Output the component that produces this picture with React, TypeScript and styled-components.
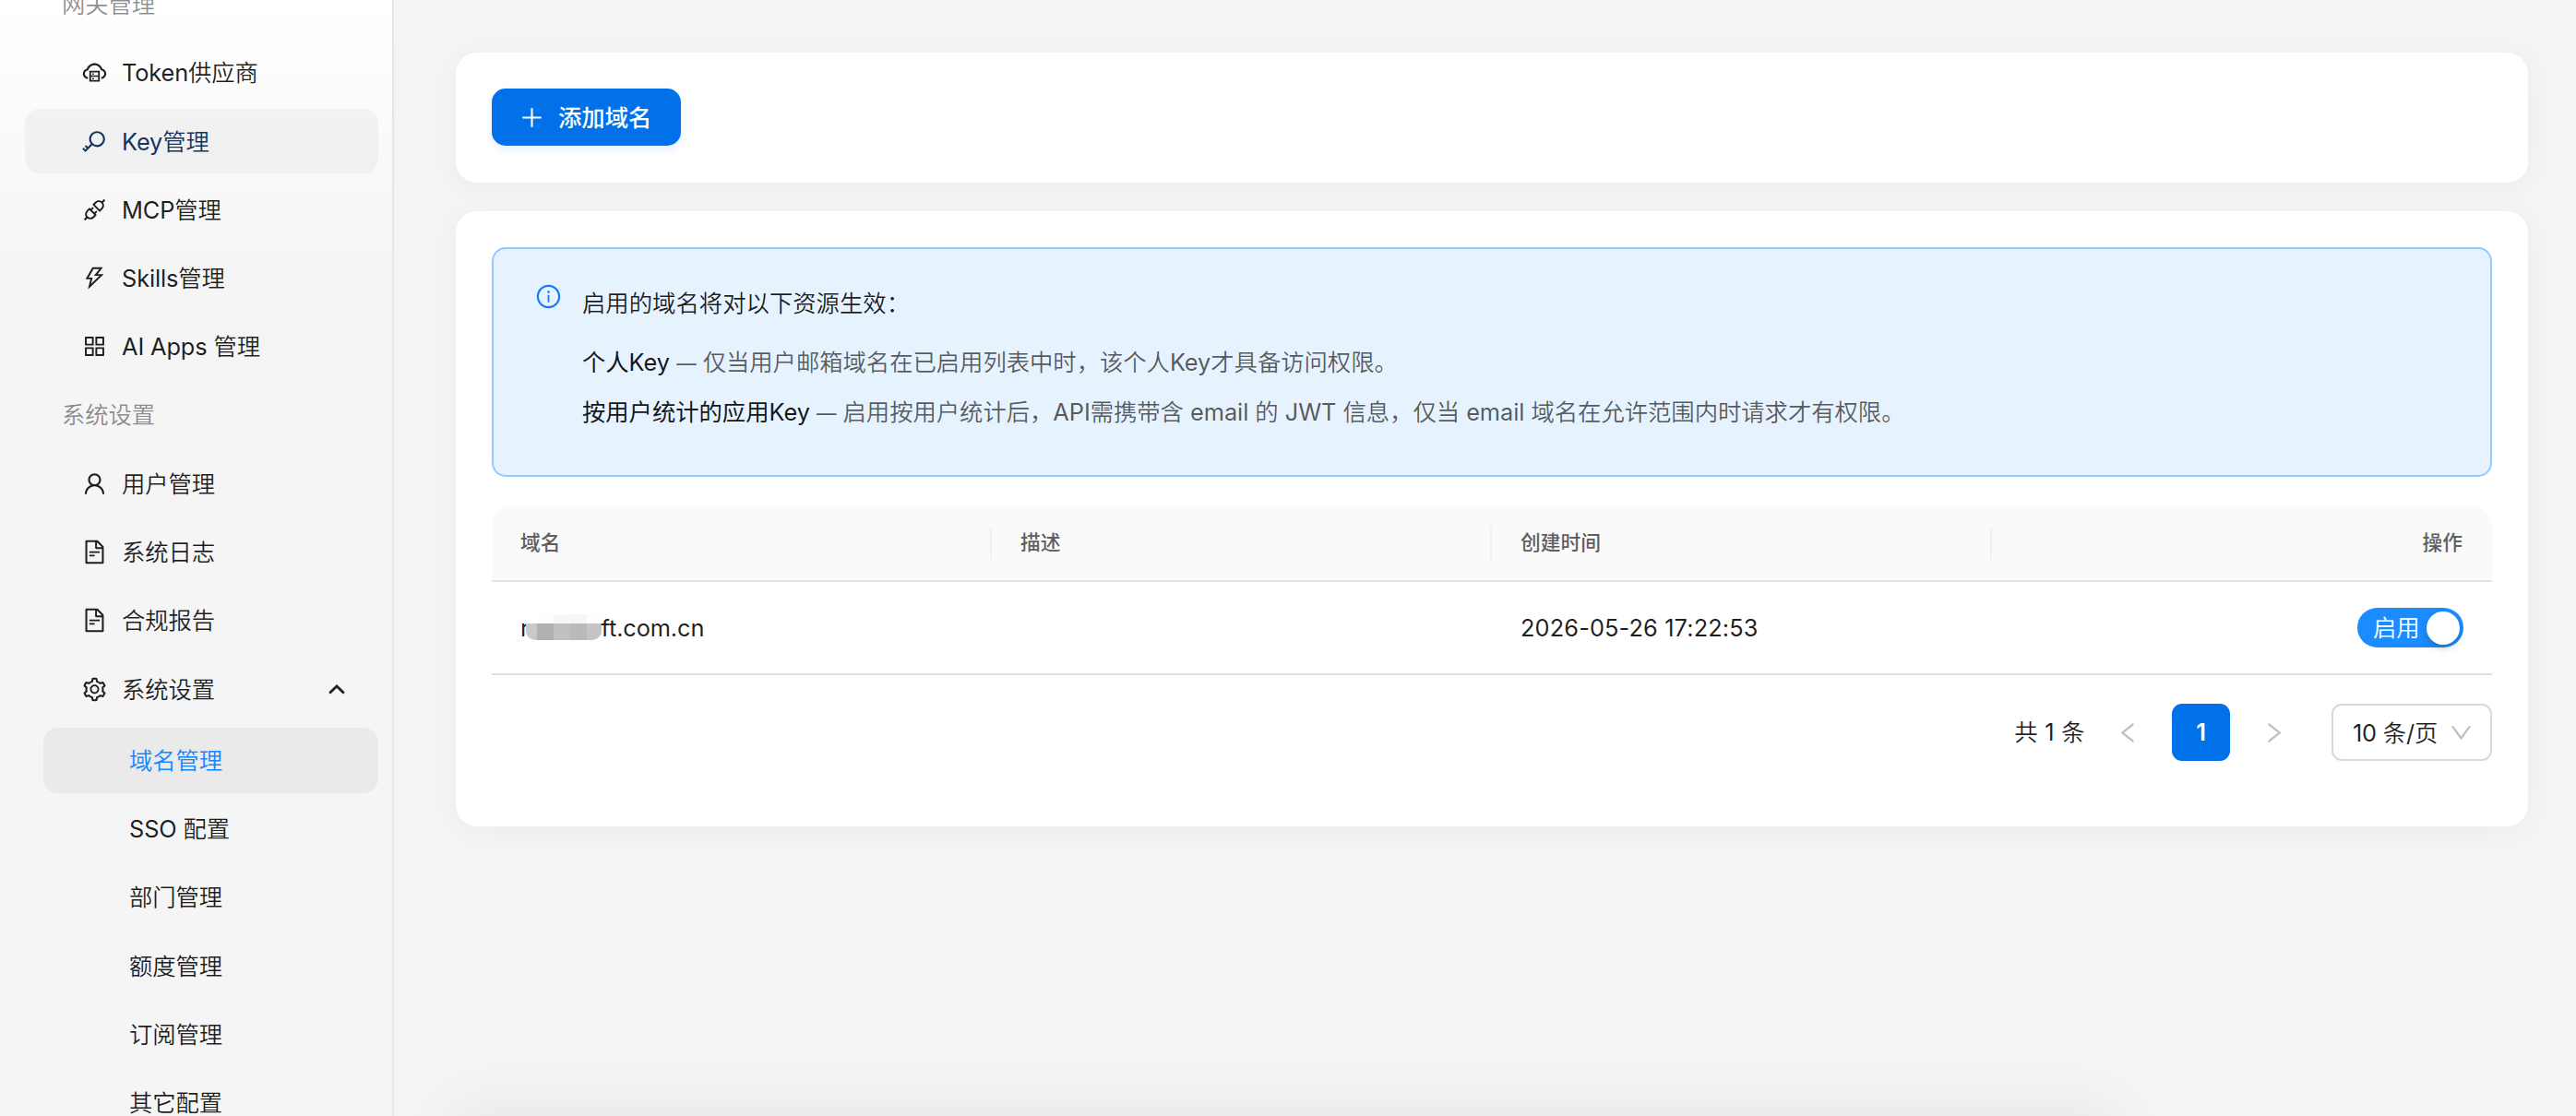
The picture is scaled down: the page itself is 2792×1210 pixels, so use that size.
import React from "react";
import styled, { createGlobalStyle, css } from "styled-components";
import {
  AiOutlineApi,
  AiOutlineAppstore,
  AiOutlineCloudServer,
  AiOutlineDown,
  AiOutlineFileText,
  AiOutlineInfoCircle,
  AiOutlineKey,
  AiOutlineLeft,
  AiOutlinePlus,
  AiOutlineRight,
  AiOutlineSetting,
  AiOutlineThunderbolt,
  AiOutlineUser,
} from "react-icons/ai";

const regularStack = `Inter, "Noto Sans CJK SC DemiLight", "Noto Sans CJK SC", sans-serif`;
const mediumStack = `Inter, "Noto Sans CJK SC", sans-serif`;

const GlobalStyle = createGlobalStyle`
  * { box-sizing: border-box; }
  body {
    margin: 0;
    background: #f4f4f7;
    color: rgba(0, 0, 0, 0.88);
    font-family: ${regularStack};
    font-size: 25.375px;
    line-height: 1.57;
    overflow: hidden;
  }
`;

const Page = styled.div`
  display: flex;
  width: 2792px;
  height: 1210px;
  overflow: hidden;
`;

const Sidebar = styled.aside`
  flex: none;
  width: 427px;
  height: 1210px;
  padding: 0 15px 0 27px;
  overflow: hidden;
  border-right: 2px solid #e6e6e8;
  background: linear-gradient(180deg, #ffffff 0, #f5f5f5 300px, #f5f5f5 100%);
  letter-spacing: -0.12px;
`;

const Menu = styled.nav`
  display: flex;
  flex-direction: column;
  gap: 4px;
  margin-top: -30.5px;
`;

const rowBase = css`
  display: flex;
  align-items: center;
  height: 70.25px;
  flex: none;
  border-radius: 16px;
  white-space: nowrap;
`;

const GroupLabel = styled.div`
  ${rowBase}
  padding-left: 40px;
  color: rgba(0, 0, 0, 0.45);
`;

const MenuItem = styled.div<{ $hovered?: boolean }>`
  ${rowBase}
  gap: 15px;
  padding: 0 36px 0 61px;
  color: ${(p) => (p.$hovered ? "#17355c" : "rgba(0, 0, 0, 0.88)")};
  background: ${(p) => (p.$hovered ? "rgba(0, 0, 0, 0.035)" : "transparent")};

  & > svg:first-child {
    width: 29px;
    height: 29px;
  }
`;

const ItemText = styled.span`
  flex: 1;
  padding-top: 1px;
`;

const SubMenu = styled.div`
  display: flex;
  flex-direction: column;
  gap: 4px;
  margin: 3px 0 0 20px;
`;

const SubItem = styled.div<{ $selected?: boolean }>`
  ${rowBase}
  padding: 1px 0 0 93px;
  color: ${(p) => (p.$selected ? "#1287ff" : "rgba(0, 0, 0, 0.88)")};
  background: ${(p) => (p.$selected ? "#eaeaea" : "transparent")};
`;

const Main = styled.main`
  flex: 1;
  display: flex;
  flex-direction: column;
  gap: 31px;
  padding: 57px 52px 0 67px;
`;

const Card = styled.section<{ $height: number }>`
  flex: none;
  height: ${(p) => p.$height}px;
  padding: 39px;
  border-radius: 23px;
  background: #fff;
  box-shadow: 0 4px 28px rgba(0, 0, 0, 0.04);
`;

const BottomPanel = styled.div`
  flex: none;
  height: 120px;
  margin: auto 450px -120px 0;
  background: #fff;
  box-shadow: 0 0 70px rgba(0, 0, 0, 0.07);
`;

const PrimaryButton = styled.button`
  display: flex;
  align-items: center;
  gap: 14px;
  width: 205px;
  height: 62px;
  padding: 0 0 0 29px;
  border: 0;
  border-radius: 15px;
  background: #0071e8;
  color: #fff;
  font: inherit;
  font-family: ${mediumStack};
  font-weight: 500;
  box-shadow: 0 4px 8px rgba(0, 100, 255, 0.12);

  svg {
    width: 29px;
    height: 29px;
  }
`;

const ButtonText = styled.span`
  padding-top: 2px;
`;

const Alert = styled.div`
  display: flex;
  height: 249px;
  padding: 37px 45px;
  border: 2px solid #91caff;
  border-radius: 15px;
  background: #e6f3ff;

  & > svg {
    flex: none;
    width: 29px;
    height: 29px;
    margin: 0 22px 0 0;
    color: #1677ff;
  }
`;

const AlertBody = styled.div`
  display: flex;
  flex-direction: column;
  white-space: nowrap;
`;

const AlertTitle = styled.div`
  height: 66px;
  line-height: 44px;
`;

const AlertLine = styled.div`
  height: 56px;
  line-height: 45px;
  color: rgba(0, 0, 0, 0.65);
  letter-spacing: -0.05px;
`;

const Strong = styled.span`
  color: rgba(0, 0, 0, 0.92);
  font-family: ${mediumStack};
`;

const Dash = styled.span`
  font-size: 21.5px;
`;

const Table = styled.div`
  margin-top: 31px;
`;

const columns = css`
  display: grid;
  grid-template-columns: repeat(4, 1fr);
  align-items: center;
`;

const HeadRow = styled.div`
  ${columns}
  height: 83px;
  border-bottom: 2px solid #e0e0e0;
  border-radius: 23px 23px 0 0;
  background: #fafafa;
`;

const HeadCell = styled.div<{ $right?: boolean }>`
  display: flex;
  align-items: center;
  justify-content: ${(p) => (p.$right ? "flex-end" : "flex-start")};
  height: 34px;
  padding: 0 ${(p) => (p.$right ? 32 : 31)}px 0 31px;
  border-right: ${(p) => (p.$right ? "0" : "2px solid #f0f0f0")};
  color: #5f5f63;
  font-family: ${mediumStack};
  font-size: 21.75px;
  font-weight: 500;
`;

const BodyRow = styled.div`
  ${columns}
  height: 101px;
  border-bottom: 2px solid #e0e0e0;
`;

const Cell = styled.div<{ $right?: boolean }>`
  display: flex;
  align-items: center;
  justify-content: ${(p) => (p.$right ? "flex-end" : "flex-start")};
  padding: 0 31px;
  white-space: nowrap;
`;

const DateText = styled.span`
  letter-spacing: 0.12px;
`;

const Mosaic = styled.span`
  display: flex;
  width: 82px;
  height: 28px;
  margin: -1px 0 0 -4px;
  overflow: hidden;
  border-radius: 2px 2px 10px 10px;
`;

const MosaicTile = styled.i<{ $w: number; $c: string; $top: string }>`
  width: ${(p) => p.$w}px;
  background: linear-gradient(${(p) => p.$top} 10px, ${(p) => p.$c} 10px);
`;

const DomainTail = styled.span`
  letter-spacing: -0.12px;
`;

const Switch = styled.div`
  display: flex;
  align-items: center;
  justify-content: space-between;
  width: 115px;
  height: 43px;
  padding: 0 4px 0 17px;
  border-radius: 22px;
  background: #1a8cff;
  color: #fff;
`;

const Knob = styled.span`
  width: 36px;
  height: 36px;
  border-radius: 50%;
  background: #fff;
  box-shadow: 0 4px 7px rgba(0, 35, 11, 0.2);
`;

const Pagination = styled.div`
  display: flex;
  align-items: center;
  justify-content: flex-end;
  height: 62px;
  margin-top: 31px;
`;

const Total = styled.span`
  margin-right: 32px;
  letter-spacing: 0.3px;
  white-space: nowrap;
`;

const Arrow = styled.span`
  display: flex;
  color: #bfbfbf;

  svg {
    width: 29px;
    height: 29px;
  }
`;

const PageNumber = styled.span`
  display: flex;
  align-items: center;
  justify-content: center;
  width: 63px;
  height: 62px;
  margin: 0 33px;
  border-radius: 11px;
  background: #0071e8;
  color: #fff;
  font-weight: 600;
`;

const SizeSelect = styled.div`
  display: flex;
  align-items: center;
  justify-content: space-between;
  width: 174px;
  height: 62px;
  margin-left: 48px;
  padding: 0 17px 0 21px;
  border: 2px solid #d9d9d9;
  border-radius: 11px;
  letter-spacing: -0.2px;
  white-space: nowrap;

  svg {
    width: 29px;
    height: 29px;
    color: #bfbfbf;
  }
`;

const SizeText = styled.span`
  padding-top: 2px;
`;

const ChevronUp = () => (
  <svg width="18" height="12" viewBox="0 0 18 12" fill="none">
    <path d="M2 9.8 9 3l7 6.8" stroke="#222" strokeWidth="2.8" strokeLinecap="round" />
  </svg>
);

const gatewayItems = [
  { icon: AiOutlineCloudServer, text: "Token供应商" },
  { icon: AiOutlineKey, text: "Key管理", hovered: true },
  { icon: AiOutlineApi, text: "MCP管理" },
  { icon: AiOutlineThunderbolt, text: "Skills管理" },
  { icon: AiOutlineAppstore, text: "AI Apps 管理" },
];

const systemItems = [
  { icon: AiOutlineUser, text: "用户管理" },
  { icon: AiOutlineFileText, text: "系统日志" },
  { icon: AiOutlineFileText, text: "合规报告" },
];

const settingItems = ["域名管理", "SSO 配置", "部门管理", "额度管理", "订阅管理", "其它配置"];

const mosaic = [
  { width: 12, color: "#c9c9c9", top: "#ffffff" },
  { width: 18, color: "#b1b1b1", top: "#fefefe" },
  { width: 18, color: "#c0c0c0", top: "#f7f7f7" },
  { width: 18, color: "#bababa", top: "#f6f6f6" },
  { width: 16, color: "#c5c5c5", top: "#fdfdfd" },
];

export default function App() {
  return (
    <Page>
      <GlobalStyle />
      <Sidebar>
        <Menu>
          <GroupLabel>网关管理</GroupLabel>
          {gatewayItems.map(({ icon: Icon, text, hovered }) => (
            <MenuItem key={text} $hovered={hovered}>
              <Icon />
              <ItemText>{text}</ItemText>
            </MenuItem>
          ))}
          <GroupLabel>系统设置</GroupLabel>
          {systemItems.map(({ icon: Icon, text }) => (
            <MenuItem key={text}>
              <Icon />
              <ItemText>{text}</ItemText>
            </MenuItem>
          ))}
          <MenuItem>
            <AiOutlineSetting />
            <ItemText>系统设置</ItemText>
            <ChevronUp />
          </MenuItem>
          <SubMenu>
            {settingItems.map((text, i) => (
              <SubItem key={text} $selected={i === 0}>
                {text}
              </SubItem>
            ))}
          </SubMenu>
        </Menu>
      </Sidebar>
      <Main>
        <Card $height={141}>
          <PrimaryButton>
            <AiOutlinePlus />
            <ButtonText>添加域名</ButtonText>
          </PrimaryButton>
        </Card>
        <Card $height={667}>
          <Alert>
            <AiOutlineInfoCircle />
            <AlertBody>
              <AlertTitle>启用的域名将对以下资源生效：</AlertTitle>
              <AlertLine>
                <Strong>个人Key</Strong> <Dash>—</Dash>{" "}
                仅当用户邮箱域名在已启用列表中时，该个人Key才具备访问权限。
              </AlertLine>
              <AlertLine>
                <Strong>按用户统计的应用Key</Strong> <Dash>—</Dash> 启用按用户统计后，API需携带含 email 的 JWT
                信息，仅当 email 域名在允许范围内时请求才有权限。
              </AlertLine>
            </AlertBody>
          </Alert>
          <Table>
            <HeadRow>
              <HeadCell>域名</HeadCell>
              <HeadCell>描述</HeadCell>
              <HeadCell>创建时间</HeadCell>
              <HeadCell $right>操作</HeadCell>
            </HeadRow>
            <BodyRow>
              <Cell>
                r
                <Mosaic>
                  {mosaic.map((tile) => (
                    <MosaicTile key={tile.color} $w={tile.width} $c={tile.color} $top={tile.top} />
                  ))}
                </Mosaic>
                <DomainTail>ft.com.cn</DomainTail>
              </Cell>
              <Cell />
              <Cell>
                <DateText>2026-05-26 17:22:53</DateText>
              </Cell>
              <Cell $right>
                <Switch>
                  启用
                  <Knob />
                </Switch>
              </Cell>
            </BodyRow>
          </Table>
          <Pagination>
            <Total>共 1 条</Total>
            <Arrow>
              <AiOutlineLeft />
            </Arrow>
            <PageNumber>1</PageNumber>
            <Arrow>
              <AiOutlineRight />
            </Arrow>
            <SizeSelect>
              <SizeText>10 条/页</SizeText>
              <AiOutlineDown />
            </SizeSelect>
          </Pagination>
        </Card>
        <BottomPanel />
      </Main>
    </Page>
  );
}
